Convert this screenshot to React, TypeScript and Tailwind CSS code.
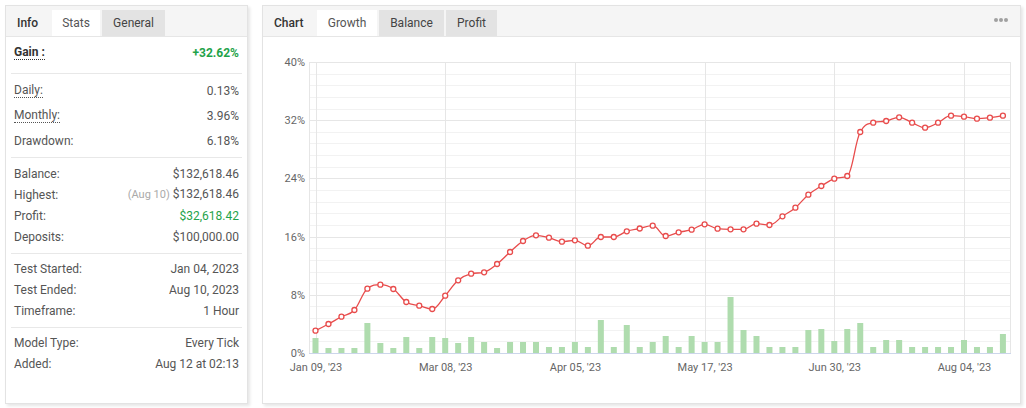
import React from "react";

// pixel positions read off the chart (x = category slot, y = growth line, bars = daily change)
const XS = (i: number) => 315.5 + i * 12.97;

const LINE = [
  330.7, 324, 316.7, 310, 288.7, 284.7, 289, 302, 305.7, 309, 295.7, 280.3, 273.7, 272.3, 264, 252, 241,
  235.3, 237.7, 241.7, 240.3, 245.7, 237, 237, 231.3, 228.5, 225.7, 236, 232.3, 229.7, 224.3, 228.7, 229.3,
  229.3, 223.7, 225, 216.3, 207.7, 194.7, 186, 178.7, 176, 132, 122.7, 121, 117.3, 122.7, 127.7, 122.7,
  115.7, 116.7, 118.7, 117.7, 115.7,
];

const BARS = [
  15, 5, 5, 5, 30, 10, 5, 16, 5, 16, 15, 10, 16, 11, 5, 11, 11, 11, 6, 6, 11, 6, 33, 6, 28, 6, 11, 17, 6, 17,
  11, 11, 56, 23, 17, 6, 6, 6, 23, 24, 12, 24, 30, 6, 13, 13, 6, 6, 6, 6, 13, 6, 6, 19,
];

const Y_TOP = 62;
const Y_BASE = 353;
const STEP = (Y_BASE - Y_TOP) / 25;
const X_LABELS = ["Jan 09, '23", "Mar 08, '23", "Apr 05, '23", "May 17, '23", "Jun 30, '23", "Aug 04, '23"];
const Y_LABELS = ["40%", "32%", "24%", "16%", "8%", "0%"];
const RED = "#e84c4c";

// highcharts-style spline, avoids overshooting at the jumps
function splinePath(ys: number[]) {
  const pts = ys.map((y, i) => ({ x: XS(i), y }));
  const s = 1.5;
  const conts = pts.map((p, i) => {
    const prev = pts[i - 1];
    const next = pts[i + 1];
    if (!prev || !next) return { lx: p.x, ly: p.y, rx: p.x, ry: p.y };
    let lx = (s * p.x + prev.x) / (s + 1);
    let ly = (s * p.y + prev.y) / (s + 1);
    let rx = (s * p.x + next.x) / (s + 1);
    let ry = (s * p.y + next.y) / (s + 1);
    const corr = ((ry - ly) * (rx - p.x)) / (rx - lx) + p.y - ry;
    ly += corr;
    ry += corr;
    if (ly > prev.y && ly > p.y) {
      ly = Math.max(prev.y, p.y);
      ry = 2 * p.y - ly;
    } else if (ly < prev.y && ly < p.y) {
      ly = Math.min(prev.y, p.y);
      ry = 2 * p.y - ly;
    }
    if (ry > next.y && ry > p.y) {
      ry = Math.max(next.y, p.y);
      ly = 2 * p.y - ry;
    } else if (ry < next.y && ry < p.y) {
      ry = Math.min(next.y, p.y);
      ly = 2 * p.y - ry;
    }
    return { lx, ly, rx, ry };
  });
  let d = `M ${pts[0].x} ${pts[0].y}`;
  for (let i = 1; i < pts.length; i++) {
    const a = conts[i - 1];
    const b = conts[i];
    d += ` C ${a.rx} ${a.ry} ${b.lx} ${b.ly} ${pts[i].x} ${pts[i].y}`;
  }
  return d;
}

function Row({ label, children, dotted }: { label: string; children: React.ReactNode; dotted?: boolean }) {
  return (
    <div className="flex h-[21px] items-center justify-between">
      {dotted ? (
        <span className="inline-block border-b border-dotted border-[#555] leading-[13px]">{label}</span>
      ) : (
        <span>{label}</span>
      )}
      <span>{children}</span>
    </div>
  );
}

function StatsPanel() {
  return (
    <div className="flex h-[399px] w-[243px] flex-col border border-[#e3e3e3] bg-white shadow-[2px_2px_3px_rgba(0,0,0,0.1)]">
      <div className="flex h-[31px] items-end gap-[2px] border-b border-[#e6e6e6] bg-[#f5f5f5]">
        <div className="flex h-[26px] w-[44px] items-center pl-[11px] font-medium text-[#333]">Info</div>
        <div className="flex h-[26px] w-[48px] items-center justify-center bg-white">Stats</div>
        <div className="flex h-[26px] w-[63px] items-center justify-center bg-[#e3e3e3] text-[#444]">General</div>
      </div>

      <div className="mx-[5px] border-b border-[#e8e8e8] px-[3px] pt-[5px] pb-[10px]">
        <div className="flex h-[21px] items-center justify-between font-bold">
          <span className="inline-block border-b border-dotted border-[#333] leading-[13px] text-[#333]">Gain :</span>
          <span className="text-[#1fa34a]">+32.62%</span>
        </div>
      </div>

      <div className="mx-[5px] border-b border-[#e8e8e8] px-[3px] pt-[4px] pb-[4px]">
        <div className="flex h-[25px] items-center justify-between">
          <span className="inline-block border-b border-dotted border-[#555] leading-[13px]">Daily:</span>
          <span>0.13%</span>
        </div>
        <div className="flex h-[25px] items-center justify-between">
          <span className="inline-block border-b border-dotted border-[#555] leading-[13px]">Monthly:</span>
          <span>3.96%</span>
        </div>
        <div className="flex h-[25px] items-center justify-between">
          <span>Drawdown:</span>
          <span>6.18%</span>
        </div>
      </div>

      <div className="mx-[5px] border-b border-[#e8e8e8] px-[3px] pt-[5px] pb-[6px]">
        <Row label="Balance:">$132,618.46</Row>
        <Row label="Highest:">
          <span className="mr-[3px] text-[11px] text-[#aaa]">(Aug 10)</span>$132,618.46
        </Row>
        <Row label="Profit:">
          <span className="text-[#1fa34a]">$32,618.42</span>
        </Row>
        <Row label="Deposits:">$100,000.00</Row>
      </div>

      <div className="mx-[5px] border-b border-[#e8e8e8] px-[3px] pt-[4px] pb-[6px]">
        <Row label="Test Started:">Jan 04, 2023</Row>
        <Row label="Test Ended:">Aug 10, 2023</Row>
        <Row label="Timeframe:">1 Hour</Row>
      </div>

      <div className="mx-[5px] px-[3px] pt-[4px]">
        <Row label="Model Type:">Every Tick</Row>
        <Row label="Added:">Aug 12 at 02:13</Row>
      </div>
    </div>
  );
}

function GrowthChart() {
  const lines = Array.from({ length: 26 }, (_, k) => ({ y: Math.round(Y_TOP + k * STEP) + 0.5, major: k % 5 === 0 }));
  const vx = [309.5, ...X_LABELS.map((_, k) => Math.round(XS(k * 10)) + 0.5), 1010.5];
  return (
    <svg width={757} height={366} viewBox="263 37 757 366" className="block">
      {lines
        .filter((l) => !l.major)
        .map((l) => (
          <line key={l.y} x1={309} x2={1011} y1={l.y} y2={l.y} stroke="#f2f2f2" shapeRendering="crispEdges" />
        ))}
      {lines
        .filter((l) => l.major)
        .map((l) => (
          <line key={l.y} x1={309} x2={1011} y1={l.y} y2={l.y} stroke="#e6e6e6" shapeRendering="crispEdges" />
        ))}
      {vx.map((x) => (
        <line key={x} x1={x} x2={x} y1={Y_TOP} y2={Y_BASE} stroke="#e6e6e6" shapeRendering="crispEdges" />
      ))}

      {BARS.map((h, i) => (
        <rect key={i} x={XS(i) - 3} y={Y_BASE - h} width={6} height={h} fill="#afdcae" />
      ))}
      <line x1={309} x2={1011} y1={Y_BASE + 0.5} y2={Y_BASE + 0.5} stroke="#ccd6eb" shapeRendering="crispEdges" />

      <path d={splinePath(LINE)} fill="none" stroke={RED} strokeWidth={1.3} />
      {LINE.map((y, i) => (
        <circle key={i} cx={XS(i)} cy={y} r={2.5} fill="#fff" stroke={RED} strokeWidth={1.3} />
      ))}

      {Y_LABELS.map((t, k) => (
        <text key={t} x={305} y={Y_TOP + k * STEP * 5 + 4} textAnchor="end" fontSize={11} fill="#666">
          {t}
        </text>
      ))}
      {X_LABELS.map((t, k) => (
        <text key={t} x={XS(k * 10) + 0.5} y={371} textAnchor="middle" fontSize={11} fill="#666">
          {t}
        </text>
      ))}
    </svg>
  );
}

function ChartPanel() {
  return (
    <div className="flex h-[399px] w-[759px] flex-col border border-[#e3e3e3] bg-white shadow-[2px_2px_3px_rgba(0,0,0,0.1)]">
      <div className="flex h-[31px] items-end gap-[2px] border-b border-[#e6e6e6] bg-[#f5f5f5]">
        <div className="flex h-[26px] w-[52px] items-center pl-[11px] font-medium text-[#333]">Chart</div>
        <div className="flex h-[26px] w-[60px] items-center justify-center bg-white">Growth</div>
        <div className="flex h-[26px] w-[65px] items-center justify-center bg-[#e3e3e3] text-[#444]">Balance</div>
        <div className="flex h-[26px] w-[51px] items-center justify-center bg-[#e3e3e3] text-[#444]">Profit</div>
        <div className="mr-[12px] ml-auto flex h-[26px] items-center gap-[1px] self-start pt-[1px]">
          <span className="h-[4px] w-[4px] rounded-full bg-[#a0a0a0]" />
          <span className="h-[4px] w-[4px] rounded-full bg-[#a0a0a0]" />
          <span className="h-[4px] w-[4px] rounded-full bg-[#a0a0a0]" />
        </div>
      </div>
      <GrowthChart />
    </div>
  );
}

export default function App() {
  return (
    <div className="flex h-[408px] w-[1026px] gap-[14px] bg-white pt-[5px] pl-[5px] font-[family-name:Roboto,sans-serif] text-[12px] text-[#555]">
      <StatsPanel />
      <ChartPanel />
    </div>
  );
}
